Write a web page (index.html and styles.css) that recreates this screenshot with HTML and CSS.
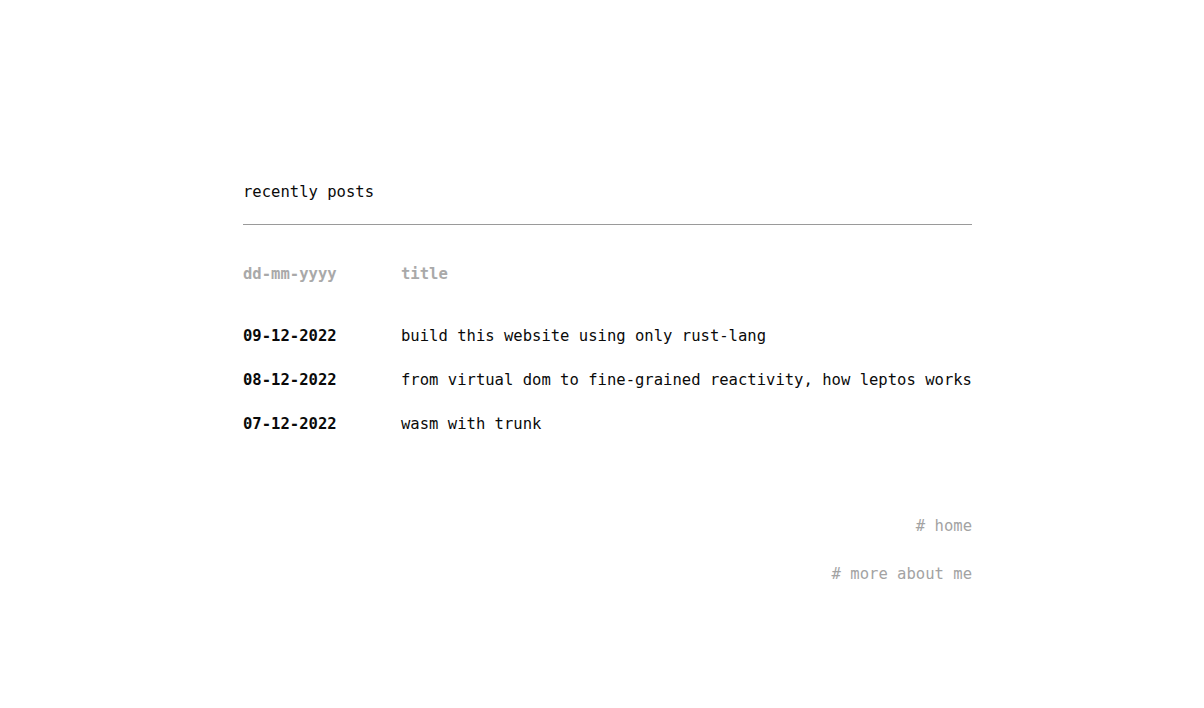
FILE: index.html
```html
<!DOCTYPE html>
<html>
<head>
<meta charset="utf-8">
<link rel="stylesheet" href="styles.css">
</head>
<body>
<main class="page">
  <h2 class="heading">recently posts</h2>
  <hr class="rule">
  <div class="posts">
    <div class="row head">
      <span class="date">dd-mm-yyyy</span>
      <span class="title">title</span>
    </div>
    <div class="row first">
      <span class="date">09-12-2022</span>
      <span class="title">build this website using only rust-lang</span>
    </div>
    <div class="row">
      <span class="date">08-12-2022</span>
      <span class="title">from virtual dom to fine-grained reactivity, how leptos works</span>
    </div>
    <div class="row">
      <span class="date">07-12-2022</span>
      <span class="title">wasm with trunk</span>
    </div>
  </div>
  <nav class="links">
    <a class="link" href="#">#&nbsp;home</a>
    <a class="link" href="#">#&nbsp;more about me</a>
  </nav>
</main>
</body>
</html>
```
FILE: styles.css
```css
html, body {
  margin: 0;
  padding: 0;
  background: #ffffff;
}
body {
  font-family: "DejaVu Sans Mono", "Liberation Mono", monospace;
  font-size: 15.55px;
  line-height: 24px;
  color: #0a0a0a;
}
.page {
  width: 729px;
  margin-left: 243px;
  padding-top: 180px;
  display: flex;
  flex-direction: column;
}
.heading {
  margin: 0;
  font-size: inherit;
  font-weight: normal;
  line-height: 24px;
}
.rule {
  margin: 20px 0 0 0;
  border: 0;
  border-top: 1px solid #9a9a9a;
  height: 0;
}
.posts {
  margin-top: 37px;
  display: flex;
  flex-direction: column;
  gap: 20px;
}
.row {
  display: grid;
  grid-template-columns: 158px 1fr;
  white-space: nowrap;
}
.row.first {
  margin-top: 18px;
}
.date {
  font-weight: bold;
}
.head {
  color: #a9a9a9;
  font-weight: bold;
}
.links {
  margin-top: 78px;
  display: flex;
  flex-direction: column;
  align-items: flex-end;
  gap: 24px;
}
.link {
  color: #a3a3a3;
  text-decoration: none;
}
```
